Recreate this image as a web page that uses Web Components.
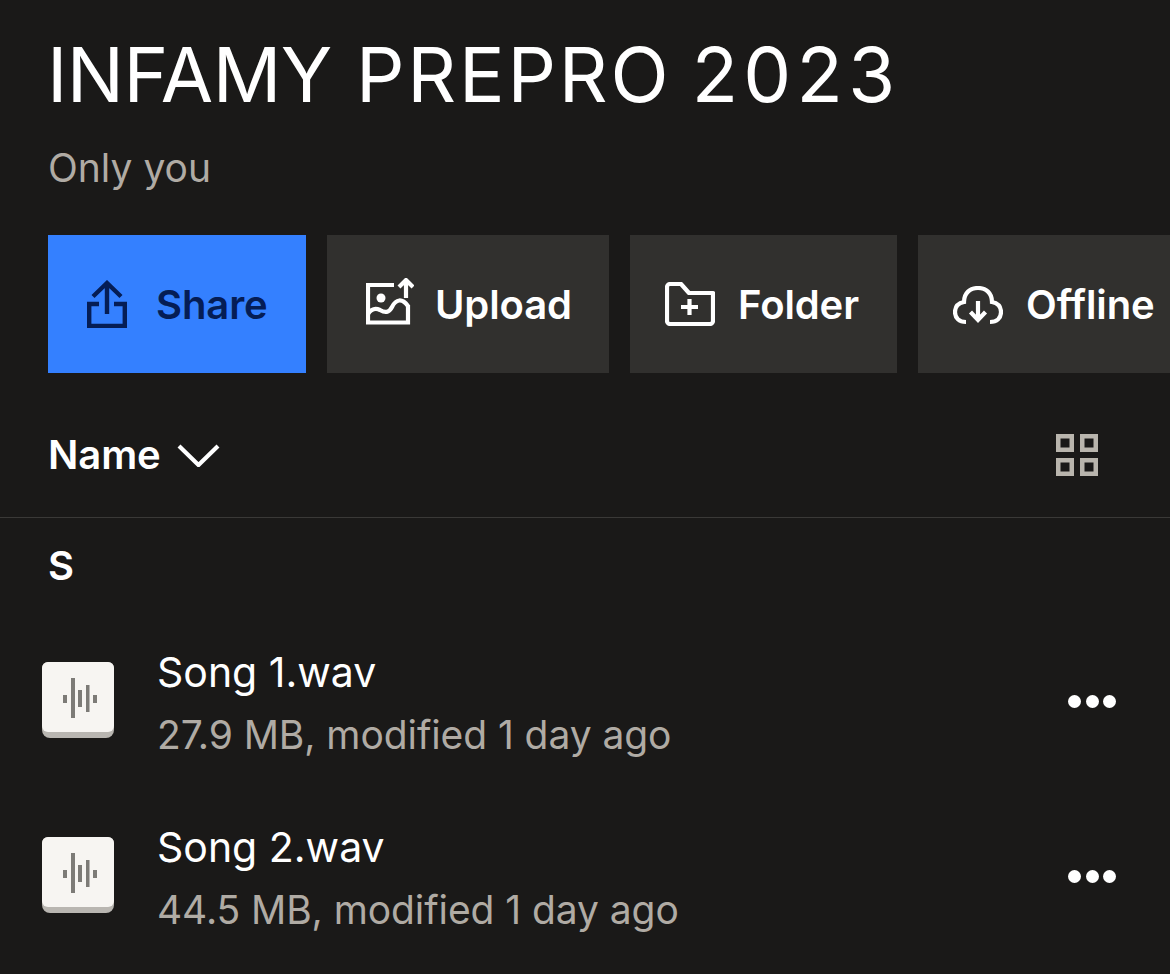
<!DOCTYPE html>
<html><head><meta charset="utf-8"><style>
html,body{margin:0;padding:0;background:#1a1918;}
body{width:1170px;height:974px;overflow:hidden;font-family:"Inter","Liberation Sans",sans-serif;}
</style></head><body>
<folder-page>
<page-header slot="header" sub="Only you"></page-header>
<action-bar slot="actions">
<action-btn primary icon="share" label="Share" gap="29" style="width:258px;padding-left:39px"></action-btn>
<action-btn icon="upload" label="Upload" gap="21" style="width:282px;padding-left:39px"></action-btn>
<action-btn icon="folder" label="Folder" gap="23" style="width:267px;padding-left:35px"></action-btn>
<action-btn icon="offline" label="Offline" gap="23" style="width:300px;padding-left:35px"></action-btn>
</action-bar>
<sort-bar slot="sort"></sort-bar>
<group-label slot="list">S</group-label>
<file-row slot="list" name="Song 1.wav" meta="27.9 MB, modified 1 day ago"></file-row>
<file-row slot="list" name="Song 2.wav" meta="44.5 MB, modified 1 day ago"></file-row>
</folder-page>
<script>
const def=(n,html)=>customElements.define(n,class extends HTMLElement{
  connectedCallback(){if(this.shadowRoot)return;const s=this.attachShadow({mode:'open'});
  s.innerHTML=typeof html==='function'?html(this):html;}
});
const DK='#051d55';
def('folder-page',`<style>:host{display:flex;flex-direction:column;width:1170px;height:974px;overflow:hidden;color:#fff}</style>
<slot name="header"></slot><slot name="actions"></slot><slot name="sort"></slot><slot name="list"></slot>`);
def('page-header',h=>`<style>
:host{display:block;padding:30px 0 0 47px;height:235px;box-sizing:border-box}
h1{margin:0;font:400 76px/88px "Inter",sans-serif;white-space:nowrap;color:#fff;word-spacing:3px}
.a{letter-spacing:-.6px}.b{letter-spacing:2.750px}.c{letter-spacing:5.300px;margin-left:-4px}
p{margin:26px 0 0 1px;font:400 39px/47px "Inter",sans-serif;color:#b0aba4;white-space:nowrap}
</style><h1><span class="a">INFAMY</span> <span class="b">PREPRO</span> <span class="c">2023</span></h1><p>${h.getAttribute('sub')}</p>`);
const ico={
share:`<svg width="40" height="48" viewBox="0 0 40 48" fill="none" stroke="${DK}" stroke-width="4.400"><path d="M12 24H2.200V46H37.800V24H27"/><path d="M20 34V4M6 16.500 20 3 34 16.500"/></svg>`,
upload:`<svg width="48" height="47" viewBox="0 0 48 47" style="margin-top:-5px" fill="none" stroke="#fff" stroke-width="4.200"><path d="M28 7H2V44.500H42V27"/><circle cx="15" cy="20" r="4.500" fill="#fff" stroke="none"/><path d="M2 36C6 30 10 30 14 32C19 35 23 35 26 29C30 21 36 20 42 28"/><path d="M40 20V3M33 9l7-7 7 7"/></svg>`,
folder:`<svg width="50" height="44" viewBox="0 0 50 44" style="margin-top:-1px" fill="none" stroke="#fff" stroke-width="4.200"><path d="M2 5a3 3 0 0 1 3-3h11l8 9h24v28a3 3 0 0 1-3 3H5a3 3 0 0 1-3-3Z" stroke-linejoin="round"/><path d="M16 25H33M24.500 17V33"/></svg>`,
offline:`<svg width="50" height="39" viewBox="0 0 50 39" style="margin-top:2px" fill="none" stroke="#fff" stroke-width="4.200"><path d="M13 36C6 36 2 32 2 26c0-6 4-9 9-10C11 7 17 2 25 2s14 5 14 14c5 1 9 4 9 10 0 6-4 10-11 10"/><path d="M25 15V33M17.500 26l7.500 8 7.500-8"/></svg>`};
def('action-btn',h=>`<style>
:host{display:flex;flex:none;align-items:center;height:138px;background:#31302e;color:#fff;box-sizing:border-box}
:host([primary]){background:#3480ff;color:${DK}}
svg{display:block;flex:none}
span{font:600 40px/46px "Inter",sans-serif;letter-spacing:-.1px;white-space:nowrap;position:relative;top:1px}
</style>${ico[h.getAttribute('icon')]}<span style="margin-left:${h.getAttribute('gap')}px">${h.getAttribute('label')}</span>`);
def('action-bar',`<style>:host{display:flex;gap:21px;padding-left:48px;width:1300px;box-sizing:border-box;height:138px}</style><slot></slot>`);
def('sort-bar',`<style>
:host{display:flex;align-items:center;justify-content:space-between;height:145px;box-sizing:border-box;padding:20px 72px 0 48px;border-bottom:1px solid #3a3937}
.l{display:flex;align-items:center;gap:16px;font:600 40px/46px "Inter",sans-serif;letter-spacing:-.1px}
</style><div class="l">Name<svg width="43" height="24" viewBox="0 0 43 24" fill="none" stroke="#fff" stroke-width="4.200"><path d="M2 3l19.500 19L41 3"/></svg></div>
<svg width="42" height="42" viewBox="0 0 42 42" fill="none" stroke="#b9b5ad" stroke-width="4.500"><rect x="2.250" y="2.250" width="13.500" height="13.500"/><rect x="26.250" y="2.250" width="13.500" height="13.500"/><rect x="2.250" y="26.250" width="13.500" height="13.500"/><rect x="26.250" y="26.250" width="13.500" height="13.500"/></svg>`);
def('group-label',`<style>:host{display:block;padding:25px 0 0 48px;height:94px;box-sizing:border-box;font:600 40px/46px "Inter",sans-serif;color:#fff}</style><slot></slot>`);
def('file-row',h=>`<style>
:host{display:flex;align-items:center;height:175px;box-sizing:border-box;padding:0 54px 0 42px}
.thumb{flex:none;width:72px;height:76px;border-radius:6px 6px 8px 8px;background:#b9b6b1}
.face{height:70px;border-radius:6px;background:#f7f5f2;display:flex;align-items:center;justify-content:center}
.face svg{margin:2px 0 0 3px}
.t{flex:1;margin:6px 0 0 43px;min-width:0}
.n{font:400 41px/48px "Inter",sans-serif;color:#fff;white-space:nowrap}
.m{margin-top:15px;font:400 39px/47px "Inter",sans-serif;color:#b0aba4;white-space:nowrap;letter-spacing:-.08px}
.d{display:flex;gap:4.500px;margin-top:4px}.d i{width:13px;height:13px;border-radius:50%;background:#fff;display:block}
</style><div class="thumb"><div class="face"><svg width="34" height="40" viewBox="0 0 34 40" fill="#7d7b77"><rect x="0" y="17" width="4" height="8"/><rect x="8" y="0" width="4" height="40"/><rect x="15" y="12" width="4" height="17"/><rect x="23" y="7" width="3.500" height="27"/><rect x="30" y="17" width="4" height="8"/></svg></div></div>
<div class="t"><div class="n">${h.getAttribute('name')}</div><div class="m">${h.getAttribute('meta')}</div></div>
<div class="d"><i></i><i></i><i></i></div>`);
</script>
</body></html>
